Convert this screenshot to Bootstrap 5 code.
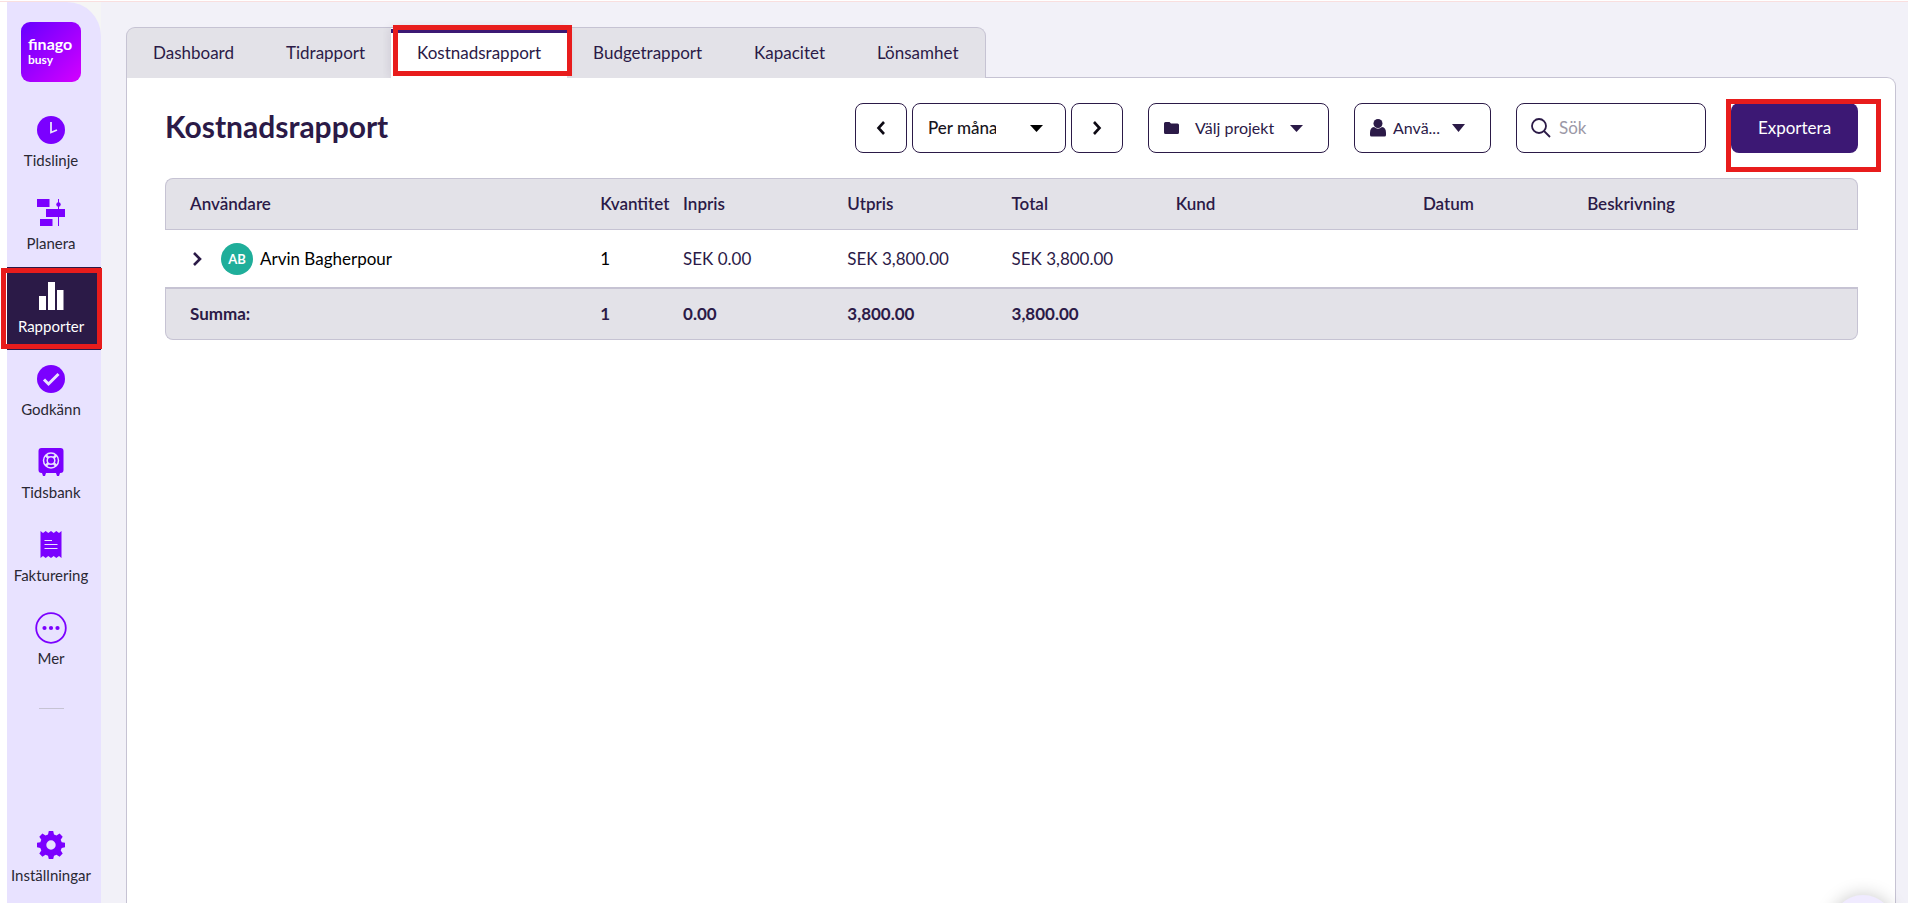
<!DOCTYPE html>
<html lang="sv">
<head>
<meta charset="utf-8">
<meta name="viewport" content="width=device-width, initial-scale=1">
<title>Kostnadsrapport</title>
<link href="https://cdn.jsdelivr.net/npm/bootstrap@5.3.0/dist/css/bootstrap.min.css" rel="stylesheet">
<style>
  :root { --ink: #2b1a47; --violet: #7b00ff; --line: #c6c3d3; --grey: #e3e2e8; --mark-red: #e81c1c; }
  body { font-family: Lato, "Liberation Sans", sans-serif; font-size: 17px; line-height: 24px; color: var(--ink); background: #f2f1f8; }
  .app-shell { height: 100vh; border-top: 1px solid #fff; overflow: hidden; }
  .app-inner { border-top: 1px solid #f9dfdf; height: 100%; }
  .side-wrap { width: 101px; padding-left: 7px; background: linear-gradient(to right, #fff 7px, #f5f5f5 7px); }
  .side-bar { background: #e8e2ff; border-top-right-radius: 34px; padding-top: 20px; padding-bottom: 4px; }
  .brand-logo { width: 60px; height: 60px; margin: 0 auto 19px 14px; display: block; }
  .side-link { height: 83px; padding-top: 13px; gap: 2px; font-size: 15px; line-height: 20px; color: #2a2833; text-decoration: none; white-space: nowrap; position: relative; padding-right: 6px; }
  .side-link svg { width: 32px; height: 32px; flex: none; margin-bottom: 2px; fill: var(--violet); }
  .side-link.current { background: var(--ink); color: #fff; }
  .side-link.current svg { fill: #fff; }
  .side-rule { width: 25px; height: 1px; background: var(--line); margin: 26px 0 0 32px; }
  .outline { position: absolute; border: 5px solid var(--mark-red); pointer-events: none; z-index: 3; }
  .outline-side { top: 1px; bottom: 1px; left: -6px; right: -1px; }
  .outline-tab { top: -3px; bottom: 2px; left: 2px; right: -5px; }
  .outline-btn { top: -4px; bottom: -19px; left: -5px; right: -23px; }
  .main-area { padding: 25px 12px 0 25px; }
  .report-tabs { background: var(--grey); border: 1px solid var(--line); border-bottom: 0; border-radius: 9px 9px 0 0; margin-bottom: -1px; position: relative; z-index: 1; align-self: flex-start; height: 51px; }
  .report-tabs a { position: relative; padding: 0 26px; line-height: 50px; color: var(--ink); text-decoration: none; white-space: nowrap; }
  .report-tabs a.current { background: #fff; box-shadow: 0 0 10px #2b1a4722; clip-path: inset(-8px -8px 0 -8px); }
  .report-tabs a.current::before { content: ""; position: absolute; top: 1px; left: 0; right: 0; height: 4px; background: #3c1874; }
  .panel { background: #fff; border: 1px solid var(--line); border-bottom: 0; border-top-right-radius: 9px; padding: 25px 37px 0 38px; }
  h1 { font-size: 30px; line-height: 46px; font-weight: 700; margin: 0; }
  .tool { height: 50px; border: 1px solid var(--ink); border-radius: 8px; background: #fff; color: var(--ink); padding: 0; }
  .tool-step { width: 52px; }
  .tool-period { width: 154px; padding: 0 69px 0 15px; font-weight: 500; color: #171420; appearance: none; background: #fff url("data:image/svg+xml,%3Csvg xmlns='http://www.w3.org/2000/svg' width='13' height='7'%3E%3Cpath d='M0 0h13L6.5 7z'/%3E%3C/svg%3E") no-repeat right 22px center; text-overflow: clip; }
  .tool-project { width: 181px; padding-left: 15px; font-size: 16px; }
  .tool-user { width: 137px; padding-left: 15px; font-size: 16px; }
  .tool-user span { margin: 0 12px 0 7px; }
  .tool-search { width: 190px; padding-left: 14px; }
  .tool-search input { border: 0; outline: 0; width: 120px; padding: 0; background: none; color: var(--ink); }
  .tool-search input::placeholder { color: #9b98a6; opacity: 1; }
  .tool-export { width: 127px; height: 50px; border: 0; border-radius: 8px; background: #3c1874; color: #fff; position: relative; }
  .report-table { table-layout: fixed; width: 100%; white-space: nowrap; border-collapse: separate; border-spacing: 0; margin-top: 25px; }
  .report-table th, .report-table td { padding: 0; border: 0 solid var(--line); }
  .report-table th:first-child, .report-table td:first-child { padding-left: 24px; }
  .report-table thead th, .report-table tfoot td { background: var(--grey); }
  .report-table thead th { height: 52px; font-weight: 600; border-width: 1px 0; }
  .report-table tbody td { height: 57px; }
  .report-table tfoot td { height: 53px; font-weight: 700; border-width: 2px 0 1px; }
  .report-table thead th:first-child, .report-table tfoot td:first-child { border-left-width: 1px; }
  .report-table thead th:last-child, .report-table tfoot td:last-child { border-right-width: 1px; }
  .report-table thead th:first-child { border-top-left-radius: 8px; }
  .report-table thead th:last-child { border-top-right-radius: 8px; }
  .report-table tfoot td:first-child { border-bottom-left-radius: 8px; }
  .report-table tfoot td:last-child { border-bottom-right-radius: 8px; }
  .avatar { width: 32px; height: 32px; border-radius: 50%; background: #1fae9a; color: #fff; font-size: 13px; font-weight: 700; margin: 0 7px 0 19px; }
  .chat-bubble { position: fixed; width: 64px; height: 64px; right: 13px; bottom: -56px; border: 0; border-radius: 50%; background: #f0ebff; box-shadow: 0 0 18px #00000038; }
</style>
</head>
<body>
<div class="app-shell">
<div class="app-inner d-flex">
  <div class="side-wrap flex-shrink-0 d-flex">
    <nav class="side-bar d-flex flex-column flex-grow-1" aria-label="Huvudmeny">
      <svg class="brand-logo flex-shrink-0" viewBox="0 0 60 60" role="img" aria-label="finago busy">
        <defs><linearGradient id="lg" x1="0" y1="0" x2="1" y2="1"><stop offset="0.1" stop-color="#7000ff"/><stop offset="1" stop-color="#d400ff"/></linearGradient></defs>
        <rect width="60" height="60" rx="9" fill="url(#lg)"/>
        <g fill="#fff" font-family="Lato, sans-serif" font-weight="700"><text x="7" y="28" font-size="16">finago</text><text x="7" y="42" font-size="12">busy</text></g>
      </svg>
      <a href="#" class="side-link d-flex flex-column align-items-center">
        <svg viewBox="0 0 32 32"><circle cx="16" cy="16" r="14"/><path d="M16 8v10.500l6-2.500" fill="none" stroke="#e8e2ff" stroke-width="1.800"/></svg>Tidslinje</a>
      <a href="#" class="side-link d-flex flex-column align-items-center">
        <svg viewBox="0 0 32 32"><path d="M2 2h12.500v8H2zM11 12h19v8H11zM5 22h12.500v7H5zM23 2h1v27h-1z"/><circle cx="23.500" cy="7.500" r="2.200"/></svg>Planera</a>
      <a href="#" class="side-link current d-flex flex-column align-items-center" aria-current="page">
        <svg viewBox="0 0 32 32"><path d="M4 16h7v14H4zM13 2h7v28h-7zM22 10h6.500v20H22z"/></svg>Rapporter
        <span class="outline outline-side"></span></a>
      <a href="#" class="side-link d-flex flex-column align-items-center">
        <svg viewBox="0 0 32 32"><circle cx="16" cy="16" r="14"/><path d="M9 16.500l4.500 4.500L23.500 11" fill="none" stroke="#e8e2ff" stroke-width="3"/></svg>Godkänn</a>
      <a href="#" class="side-link d-flex flex-column align-items-center">
        <svg viewBox="0 0 32 32"><path d="M6.500 2h19a3 3 0 0 1 3 3v19a3 3 0 0 1-3 3H25l-1 3h-2l-1-3H11l-1 3H8l-1-3h-.5a3 3 0 0 1-3-3V5a3 3 0 0 1 3-3z"/><g fill="none" stroke="#e8e2ff"><circle cx="16" cy="14.500" r="7.500" stroke-width="1.500"/><circle cx="16" cy="14.500" r="3.800" stroke-width="1.500"/><path d="M10.700 9.200l2.800 2.800M21.300 9.200L18.500 12M10.700 19.800l2.800-2.800M21.300 19.800L18.500 17" stroke-width="2.500"/></g></svg>Tidsbank</a>
      <a href="#" class="side-link d-flex flex-column align-items-center">
        <svg viewBox="0 0 32 32"><path d="M5.500 2l2.500 2 2.700-2 2.600 2L16 2l2.700 2 2.600-2L24 4l2.500-2v27L24 27l-2.700 2-2.600-2-2.700 2-2.700-2-2.600 2L8 27l-2.500 2z"/><path d="M9.500 11.500h7.500M9.500 15.500h13M9.500 19.500h13" stroke="#e8e2ff" stroke-width="1.200"/></svg>Fakturering</a>
      <a href="#" class="side-link d-flex flex-column align-items-center">
        <svg viewBox="0 0 32 32"><circle cx="16" cy="16" r="14.800" fill="none" stroke="#7b00ff" stroke-width="1.800"/><circle cx="9.500" cy="16" r="2.100"/><circle cx="16" cy="16" r="2.100"/><circle cx="22.500" cy="16" r="2.100"/></svg>Mer</a>
      <div class="side-rule flex-shrink-0"></div>
      <a href="#" class="side-link d-flex flex-column align-items-center mt-auto">
        <svg viewBox="0 0 32 32"><path fill-rule="evenodd" d="M13.800 2h4.400l.8 3.600 2.500 1 3.100-2 3.100 3.100-2 3.100 1 2.500 3.300.5v4.400l-3.300.8-1 2.500 2 3.100-3.100 3.100-3.100-2-2.500 1-.8 3.300h-4.400l-.8-3.300-2.500-1-3.100 2-3.100-3.100 2-3.100-1-2.500L2 18.200v-4.400l3.300-.5 1-2.500-2-3.100 3.100-3.100 3.100 2 2.500-1zM16 11.300a4.700 4.700 0 1 0 0 9.400 4.700 4.700 0 0 0 0-9.400z"/></svg>Inställningar</a>
    </nav>
  </div>

  <main class="main-area flex-grow-1 d-flex flex-column">
    <nav class="report-tabs d-flex" aria-label="Rapporter">
      <a href="#">Dashboard</a>
      <a href="#">Tidrapport</a>
      <a href="#" class="current" aria-current="page">Kostnadsrapport<span class="outline outline-tab"></span></a>
      <a href="#">Budgetrapport</a>
      <a href="#">Kapacitet</a>
      <a href="#">Lönsamhet</a>
    </nav>
    <section class="panel flex-grow-1">
      <div class="d-flex justify-content-between">
        <h1>Kostnadsrapport</h1>
        <div class="d-flex" style="gap:25px">
          <div class="d-flex" style="gap:5px">
            <button class="tool tool-step d-flex align-items-center justify-content-center" aria-label="Föregående"><svg width="10" height="14" viewBox="0 0 10 14" fill="none" stroke="#0d0a14" stroke-width="2.600"><path d="M8 1L2.500 7 8 13"/></svg></button>
            <select class="tool tool-period" aria-label="Period"><option>Per månad</option></select>
            <button class="tool tool-step d-flex align-items-center justify-content-center" aria-label="Nästa"><svg width="10" height="14" viewBox="0 0 10 14" fill="none" stroke="#0d0a14" stroke-width="2.600"><path d="M2 1l5.500 6L2 13"/></svg></button>
          </div>
          <button class="tool tool-project d-flex align-items-center"><svg width="15" height="12" viewBox="0 0 15 12" fill="#2b1a47"><path d="M1.500 0h4L7 1.500h6.500A1.500 1.500 0 0 1 15 3v7.500a1.500 1.500 0 0 1-1.500 1.500h-12A1.500 1.500 0 0 1 0 10.500v-9A1.500 1.500 0 0 1 1.500 0z"/></svg><span class="ms-3 me-3">Välj projekt</span><svg width="13" height="7" viewBox="0 0 13 7" fill="#2b1a47"><path d="M0 0h13L6.500 7z"/></svg></button>
          <button class="tool tool-user d-flex align-items-center"><svg width="16" height="18" viewBox="0 0 16 18" fill="#2b1a47"><circle cx="8" cy="4.500" r="4.500"/><path d="M4 8q4 3.500 8 0 4 .5 4 6v2q0 1.500-1.500 1.500h-13Q0 17.500 0 16v-2q0-5.500 4-6z"/></svg><span>Anvä...</span><svg width="13" height="8" viewBox="0 0 13 8" fill="#2b1a47"><path d="M0 0h13L6.500 8z"/></svg></button>
          <label class="tool tool-search d-flex align-items-center"><svg width="20" height="20" viewBox="0 0 20 20" fill="none" stroke="#2b1a47" stroke-width="1.800"><circle cx="8" cy="8" r="7"/><path d="M13 13l6 6"/></svg><input class="ms-2" type="search" placeholder="Sök" aria-label="Sök"></label>
          <button class="tool-export">Exportera<span class="outline outline-btn"></span></button>
        </div>
      </div>
      <table class="report-table">
        <colgroup><col><col style="width:4.9%"><col style="width:9.7%"><col style="width:9.7%"><col style="width:9.7%"><col style="width:14.6%"><col style="width:9.7%"><col style="width:16%"></colgroup>
        <thead><tr><th>Användare</th><th>Kvantitet</th><th>Inpris</th><th>Utpris</th><th>Total</th><th>Kund</th><th>Datum</th><th>Beskrivning</th></tr></thead>
        <tbody><tr>
          <td><div class="d-flex align-items-center text-black"><svg class="ms-1" width="9" height="14" viewBox="0 0 9 14" fill="none" stroke="#2b1a47" stroke-width="2.600"><path d="M1 1l6 6-6 6"/></svg><span class="avatar d-flex align-items-center justify-content-center">AB</span>Arvin Bagherpour</div></td>
          <td class="text-black">1</td><td>SEK 0.00</td><td>SEK 3,800.00</td><td>SEK 3,800.00</td><td></td><td></td><td></td></tr></tbody>
        <tfoot><tr><td>Summa:</td><td>1</td><td>0.00</td><td>3,800.00</td><td>3,800.00</td><td></td><td></td><td></td></tr></tfoot>
      </table>
    </section>
  </main>
</div>
</div>
<button class="chat-bubble" aria-label="Chatt"></button>
<script src="https://cdn.jsdelivr.net/npm/bootstrap@5.3.0/dist/js/bootstrap.bundle.min.js"></script>
</body>
</html>
